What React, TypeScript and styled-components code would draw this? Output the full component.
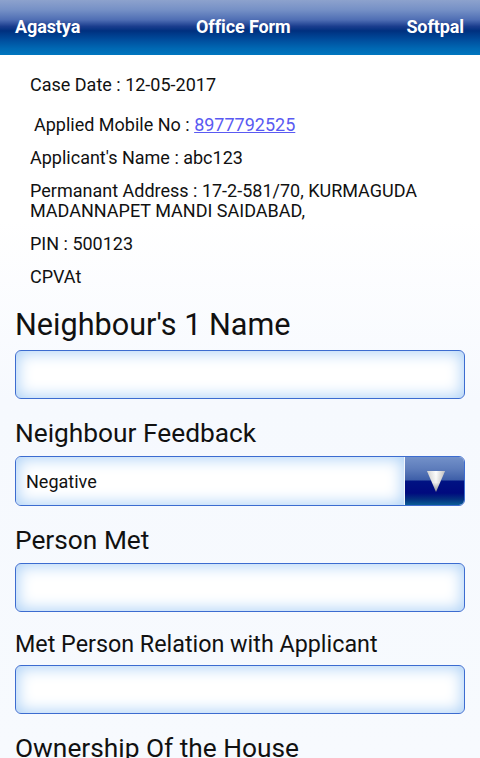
import React from "react";
import styled, { createGlobalStyle } from "styled-components";

const Global = createGlobalStyle`
  html, body { margin: 0; padding: 0; }
  body {
    font-family: Roboto, "Liberation Sans", Arial, sans-serif;
    background: linear-gradient(to bottom, #ffffff 0px, #ffffff 220px, #f6f9fe 400px, #f7fafe 758px);
    color: #111;
    min-height: 758px;
    overflow: hidden;
  }
`;

const Page = styled.div`
  width: 480px;
  height: 758px;
  overflow: hidden;
  display: flex;
  flex-direction: column;
`;

const Header = styled.header`
  height: 55px;
  flex: 0 0 55px;
  display: flex;
  align-items: center;
  justify-content: space-between;
  padding: 0 16px 2px 15px;
  box-sizing: border-box;
  background: linear-gradient(
    to bottom,
    #8da2cd 0%,
    #7590c6 18%,
    #4f6eb4 36%,
    #1a3d8e 48%,
    #00307f 56%,
    #004c9c 72%,
    #0068b3 88%,
    #0076bf 100%
  );
`;

const HeaderText = styled.span`
  color: #fff;
  font-size: 18px;
  font-weight: 700;
  letter-spacing: -0.1px;
`;

const Info = styled.section`
  padding: 20px 15px 0 30px;
  display: flex;
  flex-direction: column;
`;

const InfoRow = styled.div<{ $gap?: number; $indent?: number }>`
  font-size: 18px;
  line-height: 20px;
  color: #111;
  margin-bottom: ${(p) => p.$gap ?? 13}px;
  padding-left: ${(p) => p.$indent ?? 0}px;
`;

const Phone = styled.a`
  color: #5a5af2;
  text-decoration: underline;
`;

const Form = styled.section`
  padding: 20px 15px 0 15px;
  display: flex;
  flex-direction: column;
  gap: 19px;
`;

const Field = styled.div`
  display: flex;
  flex-direction: column;
`;

const Label = styled.label<{ $size?: number; $lh?: number }>`
  font-size: ${(p) => p.$size ?? 26.3}px;
  line-height: ${(p) => p.$lh ?? 30}px;
  color: #111;
  margin-bottom: 8px;
  white-space: nowrap;
`;

const TextInput = styled.input`
  box-sizing: border-box;
  width: 450px;
  height: 49px;
  border: 1px solid #3c6cd0;
  border-radius: 6px;
  background: #fff;
  box-shadow: inset 0 0 15px 2px #aed2f7;
  outline: none;
  padding: 0 10px;
  font-family: inherit;
  font-size: 18px;
`;

const Select = styled.div`
  box-sizing: border-box;
  width: 450px;
  height: 50px;
  border: 1px solid #3c6cd0;
  border-radius: 6px;
  display: flex;
  overflow: hidden;
  background: #fff;
`;

const SelectValue = styled.div`
  flex: 1;
  display: flex;
  align-items: center;
  padding-left: 10px;
  font-size: 18px;
  color: #111;
  box-shadow: inset 0 0 15px 2px #aed2f7;
`;

const SelectButton = styled.div`
  width: 59px;
  flex: 0 0 59px;
  border-left: 1px solid #f2f6fc;
  display: flex;
  align-items: center;
  justify-content: center;
  background: linear-gradient(
    to bottom,
    #7391c9 0%,
    #5d7cbb 25%,
    #3d5ea8 48%,
    #001283 50%,
    #000a7e 75%,
    #03307f 88%,
    #0a5c96 100%
  );
`;

const Arrow = () => (
  <svg width="20" height="24" viewBox="0 0 20 24" style={{ marginLeft: 2 }}>
    <defs>
      <linearGradient id="arrowGrad" x1="0" y1="0" x2="0" y2="1">
        <stop offset="0" stopColor="#ffffff" />
        <stop offset="0.55" stopColor="#f4f4f4" />
        <stop offset="1" stopColor="#8c8c8c" />
      </linearGradient>
      <linearGradient id="arrowSide" x1="0" y1="0" x2="1" y2="0">
        <stop offset="0" stopColor="#000" stopOpacity="0.18" />
        <stop offset="0.5" stopColor="#000" stopOpacity="0" />
        <stop offset="1" stopColor="#000" stopOpacity="0.25" />
      </linearGradient>
    </defs>
    <polygon points="1,2 19,2 10,23" fill="url(#arrowGrad)" />
    <polygon points="1,2 19,2 10,23" fill="url(#arrowSide)" />
  </svg>
);

export default function App() {
  return (
    <Page>
      <Global />
      <Header>
        <HeaderText>Agastya</HeaderText>
        <HeaderText>Office Form</HeaderText>
        <HeaderText>Softpal</HeaderText>
      </Header>
      <Info>
        <InfoRow $gap={20}>Case Date : 12-05-2017</InfoRow>
        <InfoRow $indent={4}>
          Applied Mobile No : <Phone href="#">8977792525</Phone>
        </InfoRow>
        <InfoRow>Applicant's Name : abc123</InfoRow>
        <InfoRow>
          Permanant Address : 17-2-581/70, KURMAGUDA
          <br />
          MADANNAPET MANDI SAIDABAD,
        </InfoRow>
        <InfoRow>PIN : 500123</InfoRow>
        <InfoRow $gap={0}>CPVAt</InfoRow>
      </Info>
      <Form>
        <Field>
          <Label $size={30.6} $lh={35}>Neighbour's 1 Name</Label>
          <TextInput />
        </Field>
        <Field>
          <Label>Neighbour Feedback</Label>
          <Select>
            <SelectValue>Negative</SelectValue>
            <SelectButton>
              <Arrow />
            </SelectButton>
          </Select>
        </Field>
        <Field>
          <Label>Person Met</Label>
          <TextInput />
        </Field>
        <Field>
          <Label $size={23.3} $lh={26}>Met Person Relation with Applicant</Label>
          <TextInput />
        </Field>
        <Field>
          <Label>Ownership Of the House</Label>
          <TextInput />
        </Field>
      </Form>
    </Page>
  );
}
